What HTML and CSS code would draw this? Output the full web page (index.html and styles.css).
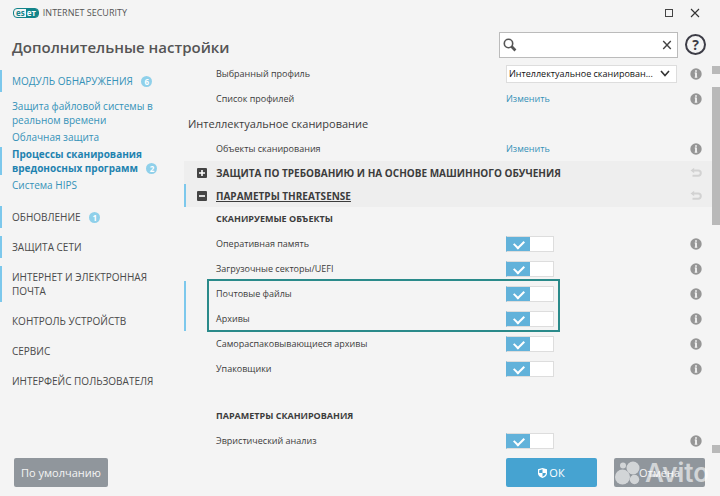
FILE: index.html
```html
<!DOCTYPE html>
<html lang="ru">
<head>
    <meta charset="UTF-8">
    <meta name="viewport" content="width=device-width, initial-scale=1.0">
    <title>Дополнительные настройки</title>
    <link rel="stylesheet" href="styles.css">
</head>
<body>
    <svg class="symbols" width="0" height="0" aria-hidden="true">
        <symbol id="icon-info" viewBox="0 0 12 12">
            <circle cx="6" cy="6" r="5.7" fill="#969696"/>
            <path d="M6 2.2v1.6M6 4.6v5" fill="none" stroke="#f4f4f4" stroke-width="1.8"/>
            <path d="M4.6 5h1.4M4.6 9.2h2.8" fill="none" stroke="#f4f4f4" stroke-width="0.8"/>
        </symbol>
        <symbol id="icon-undo" viewBox="0 0 12 12">
            <path d="M2 3.5h6.2a2.6 2.6 0 0 1 0 5.2H2.5" fill="none" stroke="#d2d2d2" stroke-width="2"/>
            <path d="M0.5 3.5L4.2 0.8v5.4z" fill="#d2d2d2"/>
        </symbol>
    </svg>

    <div class="window">
        <div class="titlebar">
            <div class="brand">
                <span class="logo"><span class="logo-left">es</span><span class="logo-right">eт</span></span>
                <span class="brand-name">INTERNET SECURITY</span>
            </div>
            <div class="window-buttons">
                <button type="button" aria-label="Развернуть">
                    <svg width="10" height="10" viewBox="0 0 10 10"><rect x="1.5" y="1.5" width="7" height="7" fill="none" stroke="#444" stroke-width="1"/></svg>
                </button>
                <button type="button" aria-label="Закрыть">
                    <svg width="10" height="10" viewBox="0 0 10 10"><path d="M1 1l8 8M9 1l-8 8" stroke="#333" stroke-width="1.1"/></svg>
                </button>
            </div>
        </div>

        <header class="header">
            <h1>Дополнительные настройки</h1>
            <div class="search">
                <svg width="14" height="14" viewBox="0 0 14 14">
                    <circle cx="5.5" cy="5.5" r="4.2" fill="none" stroke="#555" stroke-width="1.6"/>
                    <path d="M8.6 8.6l3.8 3.8" stroke="#555" stroke-width="2.8"/>
                </svg>
                <input type="text" aria-label="Поиск">
                <button type="button" aria-label="Очистить">
                    <svg width="10" height="10" viewBox="0 0 10 10"><path d="M1.2 1l7.6 8M8.8 1l-7.6 8" stroke="#444" stroke-width="1.4"/></svg>
                </button>
            </div>
            <button type="button" class="help" aria-label="Справка">?</button>
        </header>

        <div class="main">
            <nav class="sidebar">
                <a href="#" class="nav-item marked active">МОДУЛЬ ОБНАРУЖЕНИЯ <span class="badge">6</span></a>
                <div class="subnav">
                    <a href="#">Защита файловой системы в реальном времени</a>
                    <a href="#">Облачная защита</a>
                    <a href="#" class="marked current">Процессы сканирования вредоносных программ <span class="badge">2</span></a>
                    <a href="#">Система HIPS</a>
                </div>
                <a href="#" class="nav-item marked">ОБНОВЛЕНИЕ <span class="badge">1</span></a>
                <a href="#" class="nav-item marked">ЗАЩИТА СЕТИ</a>
                <a href="#" class="nav-item marked">ИНТЕРНЕТ И ЭЛЕКТРОННАЯ ПОЧТА</a>
                <a href="#" class="nav-item">КОНТРОЛЬ УСТРОЙСТВ</a>
                <a href="#" class="nav-item">СЕРВИС</a>
                <a href="#" class="nav-item">ИНТЕРФЕЙС ПОЛЬЗОВАТЕЛЯ</a>
            </nav>

            <main class="content">
                <div class="row">
                    <label for="profile">Выбранный профиль</label>
                    <div class="select">
                        <select id="profile">
                            <option>Интеллектуальное сканирован...</option>
                        </select>
                        <svg width="10" height="7" viewBox="0 0 10 7"><path d="M1 1l4 4.5L9 1" fill="none" stroke="#333" stroke-width="1.6"/></svg>
                    </div>
                    <button type="button" class="icon" aria-label="Сведения"><svg><use href="#icon-info"/></svg></button>
                </div>
                <div class="row">
                    <span>Список профилей</span>
                    <a href="#">Изменить</a>
                    <button type="button" class="icon" aria-label="Сведения"><svg><use href="#icon-info"/></svg></button>
                </div>
                <h2>Интеллектуальное сканирование</h2>
                <div class="row">
                    <span>Объекты сканирования</span>
                    <a href="#">Изменить</a>
                    <button type="button" class="icon" aria-label="Сведения"><svg><use href="#icon-info"/></svg></button>
                </div>

                <div class="section">
                    <button type="button" class="expander" aria-label="Развернуть раздел">
                        <svg width="10" height="10" viewBox="0 0 10 10"><rect width="10" height="10" rx="1" fill="#444"/><path d="M2 5h6M5 2v6" stroke="#fff" stroke-width="1.6"/></svg>
                    </button>
                    <h3>ЗАЩИТА ПО ТРЕБОВАНИЮ И НА ОСНОВЕ МАШИННОГО ОБУЧЕНИЯ</h3>
                    <button type="button" class="icon" aria-label="Вернуть"><svg><use href="#icon-undo"/></svg></button>
                </div>
                <div class="section open">
                    <button type="button" class="expander" aria-label="Свернуть раздел">
                        <svg width="10" height="10" viewBox="0 0 10 10"><rect width="10" height="10" rx="1" fill="#444"/><path d="M2 5h6" stroke="#fff" stroke-width="1.6"/></svg>
                    </button>
                    <h3>ПАРАМЕТРЫ THREATSENSE</h3>
                    <button type="button" class="icon" aria-label="Вернуть"><svg><use href="#icon-undo"/></svg></button>
                </div>

                <h4>СКАНИРУЕМЫЕ ОБЪЕКТЫ</h4>
                <div class="row">
                    <label for="memory">Оперативная память</label>
                    <input type="checkbox" class="toggle" id="memory" checked>
                    <button type="button" class="icon" aria-label="Сведения"><svg><use href="#icon-info"/></svg></button>
                </div>
                <div class="row">
                    <label for="boot">Загрузочные секторы/UEFI</label>
                    <input type="checkbox" class="toggle" id="boot" checked>
                    <button type="button" class="icon" aria-label="Сведения"><svg><use href="#icon-info"/></svg></button>
                </div>
                <div class="highlight">
                    <div class="row">
                        <label for="mail">Почтовые файлы</label>
                        <input type="checkbox" class="toggle" id="mail" checked>
                        <button type="button" class="icon" aria-label="Сведения"><svg><use href="#icon-info"/></svg></button>
                    </div>
                    <div class="row">
                        <label for="archives">Архивы</label>
                        <input type="checkbox" class="toggle" id="archives" checked>
                        <button type="button" class="icon" aria-label="Сведения"><svg><use href="#icon-info"/></svg></button>
                    </div>
                </div>
                <div class="row">
                    <label for="sfx">Самораспаковывающиеся архивы</label>
                    <input type="checkbox" class="toggle" id="sfx" checked>
                    <button type="button" class="icon" aria-label="Сведения"><svg><use href="#icon-info"/></svg></button>
                </div>
                <div class="row">
                    <label for="packers">Упаковщики</label>
                    <input type="checkbox" class="toggle" id="packers" checked>
                    <button type="button" class="icon" aria-label="Сведения"><svg><use href="#icon-info"/></svg></button>
                </div>

                <h4 class="spaced">ПАРАМЕТРЫ СКАНИРОВАНИЯ</h4>
                <div class="row">
                    <label for="heuristics">Эвристический анализ</label>
                    <input type="checkbox" class="toggle" id="heuristics" checked>
                    <button type="button" class="icon" aria-label="Сведения"><svg><use href="#icon-info"/></svg></button>
                </div>
            </main>

            <div class="scrollbar">
                <span class="arrow"></span>
                <span class="thumb"></span>
                <span class="arrow bottom"></span>
            </div>
        </div>

        <footer class="footer">
            <button type="button" class="btn">По умолчанию</button>
            <button type="button" class="btn primary">
                <svg width="9" height="10" viewBox="0 0 9 10">
                    <path d="M4.5 0L9 1.3v3.9C9 7.6 7 9.2 4.5 10 2 9.2 0 7.6 0 5.2V1.3z" fill="#fff"/>
                    <path d="M4.5 1.3v3.6H1.2V2.2zM4.5 4.9h3.3c0 1.8-1.3 3-3.3 3.8z" fill="#46a3d1"/>
                </svg>
                ОК
            </button>
            <div class="cancel">
                <button type="button" class="btn">Отмена</button>
                <div class="watermark">
                    <svg width="28" height="24" viewBox="0 0 28 24" fill="#fff">
                        <circle cx="19" cy="7" r="6.5"/>
                        <circle cx="9" cy="4.5" r="3"/>
                        <circle cx="8.5" cy="16" r="7.5"/>
                        <circle cx="20.5" cy="18.5" r="4.7"/>
                    </svg>
                    <span>Avito</span>
                </div>
            </div>
        </footer>
    </div>
</body>
</html>
```

FILE: styles.css
```css
* {
    box-sizing: border-box;
}

body {
    margin: 0;
    background: #f4f4f4;
    color: #4a4a4a;
    font-family: 'Open Sans', 'Noto Sans', sans-serif;
    font-size: 10px;
    line-height: 14px;
}

a {
    color: #3592b8;
    text-decoration: none;
}

button {
    border: none;
    padding: 0;
    background: none;
    color: inherit;
    font-family: inherit;
    cursor: pointer;
}

svg {
    display: block;
}

.symbols {
    position: absolute;
}

.window {
    display: flex;
    flex-direction: column;
    min-height: 100vh;
}

/* title bar */
.titlebar {
    display: flex;
    justify-content: space-between;
    align-items: center;
    height: 28px;
    padding: 0 20px 2px 13px;
}

.brand {
    display: flex;
    align-items: center;
    gap: 4px;
}

.logo {
    display: flex;
    border: 1px solid #12848a;
    border-radius: 4px;
    font-size: 8px;
    font-weight: bold;
    line-height: 8px;
}

.logo-left {
    padding: 0 1px 0 2px;
    color: #12848a;
}

.logo-right {
    padding: 0 2px 0 1px;
    border-radius: 0 2px 2px 0;
    background: #12848a;
    color: #fff;
}

.brand-name {
    color: #555;
    font-size: 9px;
}

.window-buttons {
    display: flex;
    gap: 16px;
}

/* header */
.header {
    display: flex;
    align-items: center;
    height: 33px;
    padding: 0 14px 0 12px;
}

.header h1 {
    flex: 1;
    margin: 4px 0 0;
    color: #555;
    font-size: 15px;
    font-weight: 600;
    line-height: 22px;
}

.search {
    display: flex;
    align-items: center;
    width: 179px;
    height: 26px;
    padding: 0 5px 0 3px;
    border: 1px solid #bbb;
    background: #fff;
}

.search input {
    flex: 1;
    min-width: 0;
    border: none;
    outline: none;
    background: none;
}

.help {
    width: 21px;
    height: 21px;
    margin-left: 7px;
    border: 2px solid #3c3c46;
    border-radius: 50%;
    color: #3c3c46;
    font-size: 14px;
    font-weight: bold;
    line-height: 16px;
}

/* sidebar */
.main {
    display: flex;
    flex: 1;
}

.sidebar {
    display: flex;
    flex-direction: column;
    gap: 8px;
    width: 184px;
    padding-top: 9px;
}

.nav-item {
    padding: 4px 20px 4px 10px;
    border-left: 2px solid transparent;
    color: #4a4a4a;
}

.nav-item.active {
    color: #3592b8;
}

.subnav {
    display: flex;
    flex-direction: column;
    gap: 3px;
    margin: -1px 0 6px;
}

.subnav a {
    padding: 0 20px 0 10px;
    border-left: 2px solid transparent;
}

.sidebar .marked {
    border-left-color: #7cc8ec;
}

.subnav .current {
    color: #1f83b0;
    font-weight: bold;
}

.badge {
    display: inline-block;
    width: 11px;
    height: 11px;
    margin-left: 6px;
    border-radius: 50%;
    background: #8fd0ea;
    color: #fff;
    font-size: 8px;
    font-weight: bold;
    line-height: 11px;
    text-align: center;
}

/* settings */
.content {
    flex: 1;
    min-width: 0;
    color: #3c3c3c;
    font-size: 9px;
}

.row {
    display: grid;
    grid-template-columns: 290px minmax(0, 1fr) 27px;
    align-items: center;
    height: 25px;
    padding: 0 8px 0 32px;
}

.content h2 {
    margin: 0;
    padding-left: 4px;
    font-size: 11px;
    font-weight: normal;
    line-height: 25px;
}

.content h4 {
    margin: 0;
    padding-left: 32px;
    font-size: 9px;
    line-height: 24px;
}

.content .spaced {
    margin-top: 23px;
}

.icon {
    justify-self: end;
    padding: 2px;
}

.icon svg {
    width: 12px;
    height: 12px;
}

.select {
    display: flex;
    align-items: center;
    height: 18px;
    padding-right: 6px;
    border: 1px solid #ddd;
    background: #fff;
}

.select select {
    flex: 1;
    min-width: 0;
    padding: 0 2px;
    border: none;
    background: none;
    color: #111;
    font-family: inherit;
    font-size: 9px;
    appearance: none;
}

.section {
    display: flex;
    align-items: center;
    height: 23px;
    padding: 0 8px 0 11px;
    border-left: 2px solid #eeeeee;
    background: #eeeeee;
}

.section.open {
    border-left-color: #7cc8ec;
}

.section.open h3 {
    text-decoration: underline;
}

.section h3 {
    flex: 1;
    margin: 0 0 0 9px;
    font-size: 10px;
}

.toggle {
    appearance: none;
    width: 48px;
    height: 16px;
    margin: 0;
    border: 1px solid #ddd;
    background: #fff;
    cursor: pointer;
}

.toggle:checked {
    border-left-color: #62b2da;
    background: linear-gradient(to right, #62b2da 50%, #fff 50%);
}

.toggle:checked::before {
    content: '';
    display: block;
    width: 8px;
    height: 5px;
    margin: 3px 0 0 7px;
    border: solid #fff;
    border-width: 0 0 2px 2px;
    transform: rotate(-45deg);
}

.highlight {
    position: relative;
    box-shadow: inset 2px 0 #7cc8ec;
}

.highlight::after {
    content: '';
    position: absolute;
    inset: -2px 152px -1px 23px;
    border: 2px solid #2a8a8a;
    pointer-events: none;
}

.scrollbar {
    display: flex;
    flex-direction: column;
    width: 8px;
    padding: 5px 0 0;
}

.arrow {
    height: 8px;
    background: #b9b9b9;
}

.thumb {
    height: 138px;
    margin-top: 13px;
    background: #b9b9b9;
}

.bottom {
    margin-top: auto;
}

/* footer */
.footer {
    display: flex;
    gap: 17px;
    padding: 5px 15px 9px 14px;
}

.btn {
    display: flex;
    justify-content: center;
    align-items: center;
    gap: 2px;
    min-width: 91px;
    height: 29px;
    padding: 0 7px;
    border-radius: 2px;
    background: #90969c;
    color: #f4f4f4;
    font-size: 11px;
}

.primary {
    margin-left: auto;
    background: #46a3d1;
    color: #fff;
}

.cancel {
    position: relative;
}

.watermark {
    position: absolute;
    top: 0;
    left: 0;
    display: flex;
    align-items: center;
    gap: 3px;
    opacity: 0.6;
    color: #fff;
    font-family: Inter, sans-serif;
    font-size: 26px;
    font-weight: 600;
    line-height: 29px;
    pointer-events: none;
}
```
